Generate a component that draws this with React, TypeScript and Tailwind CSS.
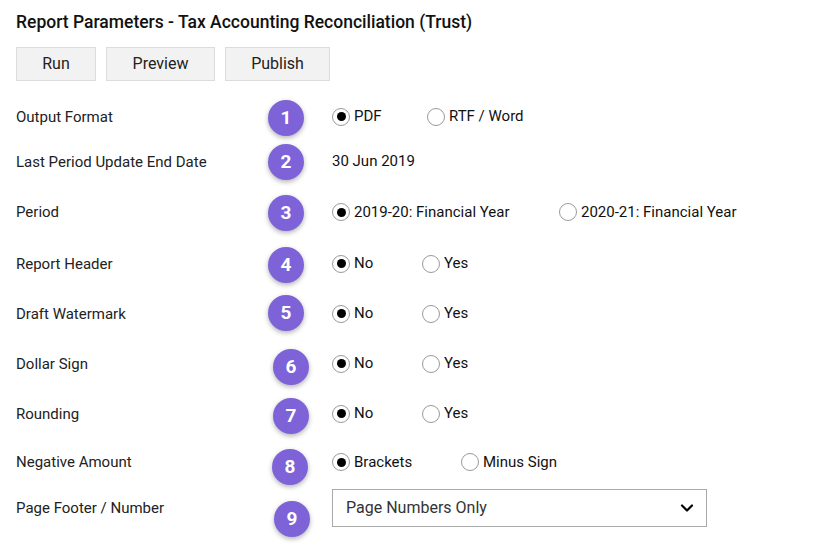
import { ChevronDown } from 'lucide-react'

type Opt = { label: string; checked?: boolean }

const rows: { label: string; h: string; options?: Opt[]; text?: string; select?: string; widths?: string }[] = [
  { label: 'Output Format', h: 'h-[44px]', options: [{ label: 'PDF', checked: true }, { label: 'RTF / Word' }], widths: 'w-[95px]' },
  { label: 'Last Period Update End Date', h: 'h-[47px]', text: '30 Jun 2019' },
  { label: 'Period', h: 'h-[53px]', options: [{ label: '2019-20: Financial Year', checked: true }, { label: '2020-21: Financial Year' }], widths: 'w-[227px]' },
  { label: 'Report Header', h: 'h-[50px]', options: [{ label: 'No', checked: true }, { label: 'Yes' }], widths: 'w-[90px]' },
  { label: 'Draft Watermark', h: 'h-[50px]', options: [{ label: 'No', checked: true }, { label: 'Yes' }], widths: 'w-[90px]' },
  { label: 'Dollar Sign', h: 'h-[50px]', options: [{ label: 'No', checked: true }, { label: 'Yes' }], widths: 'w-[90px]' },
  { label: 'Rounding', h: 'h-[50px]', options: [{ label: 'No', checked: true }, { label: 'Yes' }], widths: 'w-[90px]' },
  { label: 'Negative Amount', h: 'h-[47px]', options: [{ label: 'Brackets', checked: true }, { label: 'Minus Sign' }], widths: 'w-[129px]' },
  { label: 'Page Footer / Number', h: 'h-[44px]', select: 'Page Numbers Only' },
]

// annotation badges laid over the form
const badges = [
  { n: 1, pos: 'left-[268px] top-[100px]' },
  { n: 2, pos: 'left-[268px] top-[144px]' },
  { n: 3, pos: 'left-[268px] top-[195px]' },
  { n: 4, pos: 'left-[268px] top-[247px]' },
  { n: 5, pos: 'left-[268px] top-[295px]' },
  { n: 6, pos: 'left-[273px] top-[349px]' },
  { n: 7, pos: 'left-[273px] top-[398px]' },
  { n: 8, pos: 'left-[272px] top-[449px]' },
  { n: 9, pos: 'left-[274px] top-[501px]' },
]

function Radio({ checked }: { checked?: boolean }) {
  return (
    <span className="w-[18px] h-[18px] rounded-full border border-[#9a9a9a] bg-white flex items-center justify-center shrink-0">
      {checked && <span className="w-[9px] h-[9px] rounded-full bg-black" />}
    </span>
  )
}

export default function App() {
  return (
    <div
      className="relative w-[829px] h-[548px] bg-white text-[#1f1f1f] overflow-hidden"
      style={{ fontFamily: 'Roboto, "Liberation Sans", sans-serif' }}
    >
      <div className="px-4">
        <h1 className="pt-[11px] text-[17.5px] font-medium text-[#111] leading-[22px]">
          Report Parameters - Tax Accounting Reconciliation (Trust)
        </h1>
        <div className="flex gap-[10px] mt-[14px]">
          <button className="w-[80px] h-[34px] bg-[#f2f2f2] border border-[#dcdcdc] text-[16px] text-[#222]">Run</button>
          <button className="w-[109px] h-[34px] bg-[#f2f2f2] border border-[#dcdcdc] text-[16px] text-[#222]">Preview</button>
          <button className="w-[105px] h-[34px] bg-[#f2f2f2] border border-[#dcdcdc] text-[16px] text-[#222]">Publish</button>
        </div>

        <div className="mt-[14px]">
          {rows.map((r) => (
            <div key={r.label} className={`flex items-center ${r.h}`}>
              <div className="w-[316px] text-[15px] text-[#222]">{r.label}</div>
              {r.options && (
                <div className="flex items-center -mt-[1px]">
                  {r.options.map((o, i) => (
                    <label key={o.label} className={`flex items-center gap-[4px] text-[15px] text-[#111] ${i === 0 ? r.widths : ''}`}>
                      <Radio checked={o.checked} />
                      <span>{o.label}</span>
                    </label>
                  ))}
                </div>
              )}
              {r.text && <div className="text-[15px] text-[#111] -mt-[3px]">{r.text}</div>}
              {r.select && (
                <div className="w-[375px] h-[38px] border border-[#a9a9a9] flex items-center justify-between pl-[13px] pr-[9px]">
                  <span className="text-[16px] text-[#333]">{r.select}</span>
                  <ChevronDown size={20} strokeWidth={2.6} className="text-black" />
                </div>
              )}
            </div>
          ))}
        </div>
      </div>

      {badges.map((b) => (
        <div
          key={b.n}
          className={`absolute ${b.pos} w-[36px] h-[36px] rounded-full bg-[#7d62d8] text-white text-[19px] font-bold flex items-center justify-center shadow-[0_2px_5px_rgba(0,0,0,0.3)]`}
        >
          {b.n}
        </div>
      ))}
    </div>
  )
}
